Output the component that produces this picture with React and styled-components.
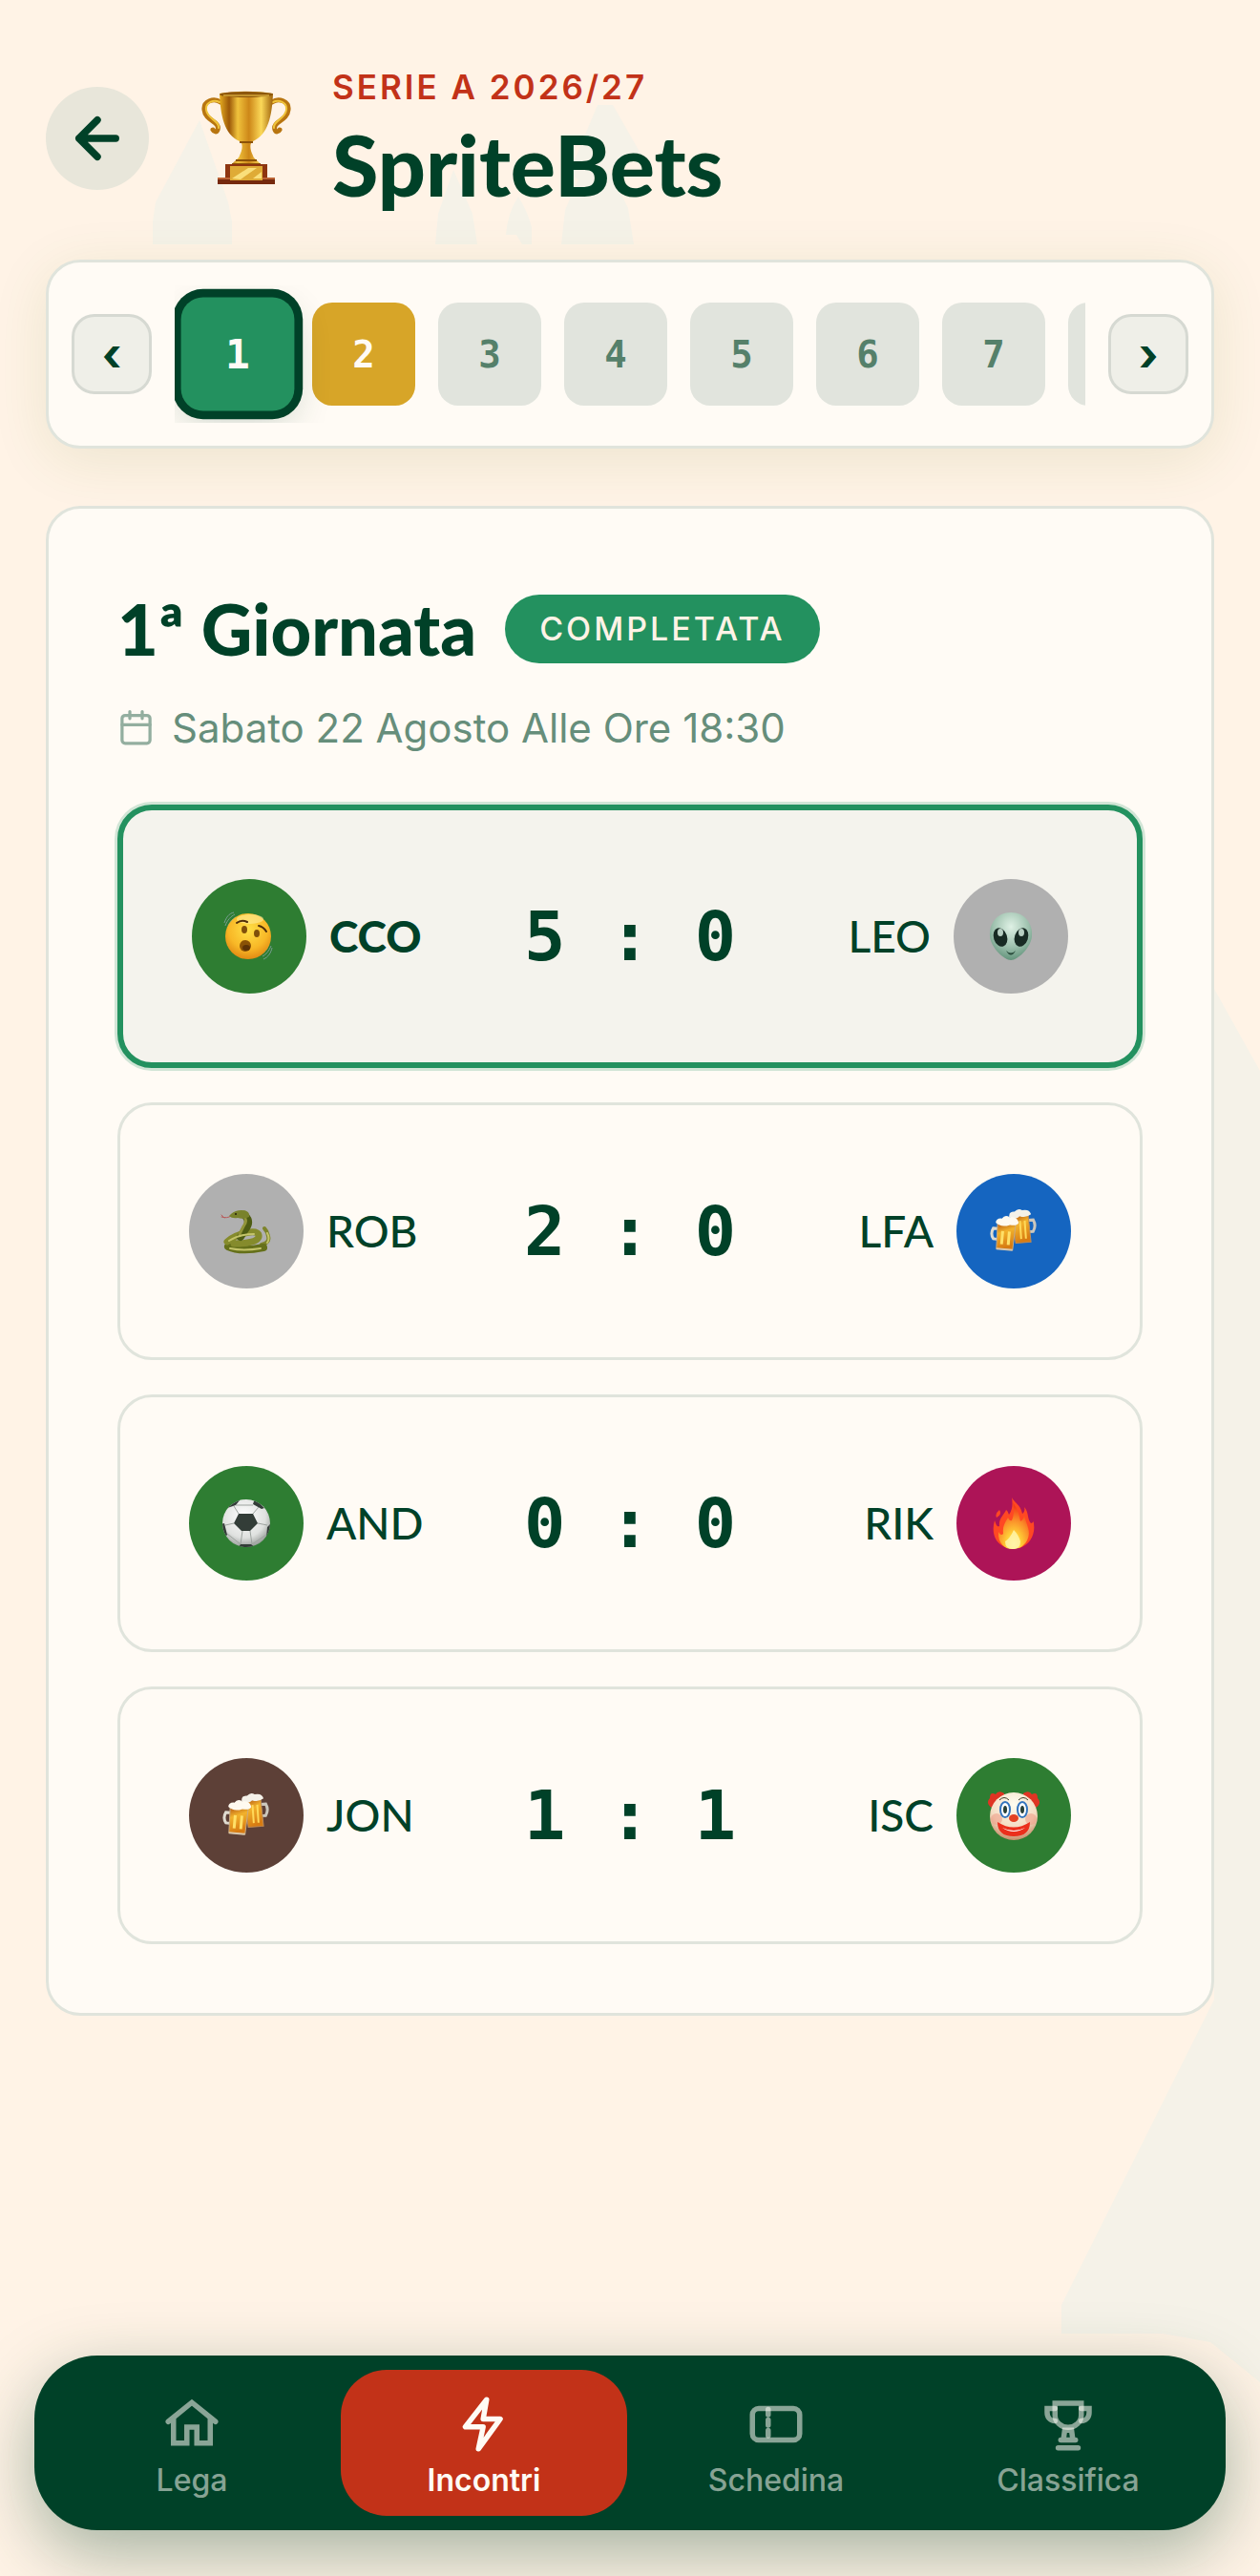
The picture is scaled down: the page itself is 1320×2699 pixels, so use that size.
import { useState } from "react";
import styled, { createGlobalStyle, css } from "styled-components";

const GlobalStyle = createGlobalStyle`
  * {
    box-sizing: border-box;
  }

  body {
    margin: 0;
    background: #fff3e6;
    color: #004128;
    font-family: Inter, "Open Sans", sans-serif;
  }

  button {
    font: inherit;
    padding: 0;
    border: 0;
    cursor: pointer;
  }

  h1, h2, p, ol, ul {
    margin: 0;
    padding: 0;
  }
`;

const Page = styled.div`
  position: relative;
  isolation: isolate;
  min-height: 100vh;
  display: flex;
  flex-direction: column;
  overflow: hidden;
`;

const HeaderTrees = styled.svg`
  position: absolute;
  z-index: -1;
  top: 108px;
  left: 156px;
  width: 560px;
  height: 150px;
`;

const SideTree = styled.svg`
  position: absolute;
  z-index: -1;
  top: 1036px;
  right: 0;
  width: 208px;
  height: 1460px;
`;

const Main = styled.main`
  padding: 64px 48px 60px;
`;

const Header = styled.header`
  display: flex;
  align-items: center;
  margin-bottom: 46px;
`;

const BackButton = styled.button`
  width: 108px;
  height: 108px;
  border-radius: 50%;
  display: flex;
  align-items: center;
  justify-content: center;
  background: #e8e6da;
  color: #004128;
`;

const LeagueBadge = styled.div`
  width: 132px;
  margin: 0 24px 0 36px;
  display: flex;
  justify-content: center;
`;

const Season = styled.p`
  font-size: 35px;
  line-height: 54px;
  font-weight: 600;
  letter-spacing: 3px;
  text-transform: uppercase;
  color: #c23218;
`;

const LeagueName = styled.h1`
  font-family: Lato, sans-serif;
  font-size: 88px;
  line-height: 108px;
  font-weight: 900;
`;

const Panel = styled.section`
  background: #fffbf5;
  border: 3px solid #e0e4dc;
  border-radius: 36px;
`;

const RoundPicker = styled(Panel).attrs({ as: "nav" })`
  display: flex;
  align-items: center;
  gap: 24px;
  padding: 24px;
  margin-bottom: 60px;
  box-shadow: 0 12px 60px rgba(80, 120, 20, 0.11);
`;

const StepButton = styled.button`
  flex: none;
  width: 84px;
  height: 84px;
  border: 3px solid #d6d9d2;
  border-radius: 24px;
  background: #efefe8;
  color: #004128;
  font-size: 48px;
  line-height: 72px;
  font-weight: 700;
`;

const Rounds = styled.ol`
  flex: 1;
  min-width: 0;
  display: flex;
  gap: 24px;
  padding: 18px 12px;
  overflow: hidden;
  list-style: none;
`;

const RoundChip = styled.button`
  display: block;
  width: 108px;
  height: 108px;
  border-radius: 21px;
  font-family: "DejaVu Sans Mono", monospace;
  font-size: 39px;
  font-weight: 700;
  background: #e1e4dd;
  color: #55806a;

  ${({ $status }) =>
    $status === "next" &&
    css`
      background: #d7a528;
      color: #fffbf5;
    `}

  ${({ $active }) =>
    $active &&
    css`
      transform: scale(1.1);
      background: #23915f;
      color: #fffbf5;
      box-shadow: 0 0 0 8px #004128, 0 12px 36px rgba(0, 65, 40, 0.2);
    `}
`;

const RoundCard = styled(Panel)`
  padding: 72px;
`;

const TitleRow = styled.div`
  display: flex;
  align-items: center;
  gap: 30px;
  margin-bottom: 18px;
`;

const RoundTitle = styled.h2`
  font-family: Lato, sans-serif;
  font-size: 74px;
  line-height: 108px;
  font-weight: 900;
`;

const Status = styled.span`
  height: 72px;
  padding: 0 36px;
  border-radius: 36px;
  background: #23915f;
  color: #fff3e6;
  font-size: 34px;
  line-height: 72px;
  font-weight: 500;
  letter-spacing: 3px;
  text-transform: uppercase;
`;

const DateRow = styled.p`
  display: flex;
  align-items: center;
  gap: 18px;
  margin-bottom: 49px;
  font-size: 42px;
  line-height: 63px;
  color: #668e7b;

  svg {
    opacity: 0.7;
  }
`;

const Matches = styled.ul`
  display: flex;
  flex-direction: column;
  gap: 36px;
  list-style: none;
`;

const Match = styled.li`
  display: grid;
  grid-template-columns: 1fr auto 1fr;
  align-items: center;
  padding: 72px;
  border: 3px solid #e0e4dc;
  border-radius: 36px;

  ${({ $mine }) =>
    $mine &&
    css`
      border: 6px solid #23915f;
      background: #f4f3ed;
      box-shadow: 0 0 0 3px #d1e5d6;
    `}
`;

const Team = styled.div`
  display: flex;
  align-items: center;
  gap: 24px;
  flex-direction: ${({ $away }) => ($away ? "row-reverse" : "row")};
  font-family: Lato, sans-serif;
  font-size: 46px;
  line-height: 60px;
  font-weight: ${({ $bold }) => ($bold ? 900 : 500)};
`;

const Avatar = styled.span`
  width: 120px;
  height: 120px;
  border-radius: 50%;
  display: flex;
  align-items: center;
  justify-content: center;
  background: ${({ $color }) => $color};
`;

const Score = styled.div`
  display: flex;
  gap: 46px;
  font-family: "DejaVu Sans Mono", monospace;
  font-size: 72px;
  line-height: 84px;
  font-weight: 700;
`;

const TabBar = styled.nav`
  display: grid;
  grid-template-columns: repeat(4, 1fr);
  gap: 6px;
  margin: auto 36px 48px;
  padding: 15px;
  border-radius: 66px;
  background: #004128;
  box-shadow: 0 24px 72px rgba(0, 65, 40, 0.36);
`;

const Tab = styled.a`
  display: flex;
  flex-direction: column;
  align-items: center;
  gap: 3px;
  padding: 24px 0 15px;
  border-radius: 48px;
  font-size: 32px;
  line-height: 45px;
  font-weight: ${({ $active }) => ($active ? 600 : 500)};
  color: ${({ $active }) => ($active ? "#fffbf5" : "rgba(255, 251, 245, 0.54)")};
  background: ${({ $active }) => ($active ? "#c23218" : "transparent")};
  text-decoration: none;
`;

const LineIcon = ({ size = 66, width = 2, children }) => (
  <svg
    width={size}
    height={size}
    viewBox="0 0 24 24"
    fill="none"
    stroke="currentColor"
    strokeWidth={width}
    strokeLinecap="round"
    aria-hidden="true"
  >
    {children}
  </svg>
);

const HomeIcon = () => (
  <LineIcon>
    <path d="M3 11l9-7.3 9 7.3M5 9.6V19.2h5.1v-6.1h3.8v6.1H19V9.6" />
  </LineIcon>
);

const BoltIcon = () => (
  <LineIcon>
    <path strokeLinejoin="round" d="M13 2.6L4.9 13h6.8l-1.8 8.4L18.2 10h-6.5z" />
  </LineIcon>
);

const TicketIcon = () => (
  <LineIcon>
    <rect x="3" y="6" width="18" height="12" rx="2.4" />
    <path strokeDasharray="2 2" d="M9 6.4v12" />
  </LineIcon>
);

const CupIcon = () => (
  <LineIcon>
    <path strokeLinecap="butt" d="M7 4h10v4.5a5 4.7 0 0 1-10 0z" />
    <path d="M7 6H4v1.5C4 9.3 5.2 10.7 7 10.7M17 6h3v1.5c0 1.8-1.2 3.2-3 3.2" />
    <path d="M10.7 14.3h2.6l.5 3.7h-3.6zM9.2 18h5.6M8.2 21h7.6" />
  </LineIcon>
);

const ArrowIcon = () => (
  <LineIcon width={2.7}>
    <path strokeLinejoin="round" d="M19 12H5M12 5l-7 7 7 7" />
  </LineIcon>
);

const CalendarIcon = () => (
  <LineIcon size={39}>
    <rect x="3" y="4" width="18" height="18" rx="2" />
    <path d="M3 10h18M8 1.6V6M16 1.6V6" />
  </LineIcon>
);

const Trophy = () => (
  <svg width="96" height="100" viewBox="0 0 96 100" aria-hidden="true">
    <defs>
      <linearGradient id="gold">
        <stop offset="0" stopColor="#e5ad22" />
        <stop offset=".18" stopColor="#9c5808" />
        <stop offset=".34" stopColor="#f0c23c" />
        <stop offset=".55" stopColor="#cd8718" />
        <stop offset=".78" stopColor="#fbd858" />
        <stop offset="1" stopColor="#9f620b" />
      </linearGradient>
    </defs>
    <g fill="none" strokeLinecap="round">
      <path d="M21 12C14 7 3 11 4 20c1 12 17 12 14 21-1 3-4 2-5 0M75 12c7-5 18-1 17 8-1 12-17 12-14 21 1 3 4 2 5 0" stroke="#b87510" strokeWidth="5" />
      <path d="M20 12C14 9 5 12 6 20c1 10 14 11 13 19M76 12c6-3 15 0 14 8-1 10-14 11-13 19" stroke="#efc33a" strokeWidth="2" />
    </g>
    <path d="M20 3c17-3 39-3 56 0-1 23-5 43-21 50-4 2-3 9 0 15 1 4 6 5 9 11H32c3-6 8-7 9-11 3-6 4-13 0-15C25 46 21 26 20 3z" fill="url(#gold)" />
    <ellipse cx="48" cy="4" rx="28" ry="3" fill="#8d570b" />
    <path d="M24 5h48" stroke="#f7cf52" strokeWidth="1" />
    <path d="M41 54h14M37 73h22M33 77h30" stroke="#8c5208" strokeWidth="2" />
    <path d="M26 77h44v16H26z" fill="#8e3510" />
    <path d="M18 92h60v6H18z" fill="#76290e" />
    <path d="M18 92h60" stroke="#bb6234" strokeWidth="2" />
    <path d="M31 79h34v15H31z" fill="#dfab36" />
    <path d="M33 92l17-11h9L42 93zM55 92l9-7v7z" fill="#f9df7b" />
  </svg>
);

const Face = () => (
  <svg width="58" height="56" viewBox="0 0 58 56" aria-hidden="true">
    <defs>
      <radialGradient id="face" cx=".5" cy=".35" r=".65">
        <stop offset="0" stopColor="#ffe047" />
        <stop offset=".65" stopColor="#f8b827" />
        <stop offset="1" stopColor="#e18a13" />
      </radialGradient>
    </defs>
    <g fill="none" stroke="#789c91" strokeWidth="1">
      <path d="M3 14C5 8 8 4 13 3M4 17c2-6 6-10 10-12M7 17c2-4 4-7 8-9M44 52c5-2 8-7 9-12M43 49c4-2 7-6 9-11M41 47c4-2 7-5 8-9" />
    </g>
    <ellipse cx="28" cy="28" rx="24" ry="24" fill="url(#face)" />
    <ellipse cx="30" cy="10" rx="14" ry="5" fill="#ffed9a" opacity=".6" />
    <path d="M16 14q5-4 11-1M39 17q5 1 8 6" fill="none" stroke="#51300a" strokeWidth="2" strokeLinecap="round" />
    <ellipse cx="24" cy="21" rx="3" ry="4" fill="#80500a" />
    <ellipse cx="37" cy="25" rx="3" ry="4" fill="#80500a" />
    <ellipse cx="25" cy="38" rx="6" ry="6" fill="#8a5206" />
    <ellipse cx="26" cy="40" rx="4" ry="3" fill="#5c3206" />
  </svg>
);

const Alien = () => (
  <svg width="52" height="54" viewBox="0 0 52 54" aria-hidden="true">
    <defs>
      <radialGradient id="alien" cx=".5" cy=".3" r=".7">
        <stop offset="0" stopColor="#dff1e5" />
        <stop offset=".6" stopColor="#9ec1ae" />
        <stop offset="1" stopColor="#62937b" />
      </radialGradient>
    </defs>
    <path d="M26 2C11 2 3 14 4 27c1 12 15 25 22 25s21-13 22-25C49 14 41 2 26 2z" fill="url(#alien)" />
    <ellipse cx="15" cy="28" rx="7" ry="10" fill="#182b24" transform="rotate(-18 15 28)" />
    <ellipse cx="37" cy="28" rx="7" ry="10" fill="#182b24" transform="rotate(18 37 28)" />
    <ellipse cx="15" cy="23" rx="3" ry="4" fill="#b7cfc2" />
    <ellipse cx="37" cy="23" rx="3" ry="4" fill="#b7cfc2" />
    <path d="M21 42q5 5 10 0q-5 9-10 0z" fill="#284b3a" />
  </svg>
);

const Snake = () => (
  <svg width="56" height="52" viewBox="0 0 56 52" aria-hidden="true">
    <g fill="none" strokeLinecap="round">
      <path d="M12 10Q8 13 2 11M5 12l-3-3" stroke="#b85a5a" strokeWidth="1" />
      <path d="M44 40q9-2 7-9-1-5-4-8" stroke="#7d842a" strokeWidth="4" />
      <path d="M9 42q13 6 37 1" stroke="#65701a" strokeWidth="8" />
      <path d="M8 37q9-8 24-10 10-1 9 5-2 7-26 7" stroke="#858b2c" strokeWidth="7" />
      <path d="M27 10q6 6 0 14l-5 8" stroke="#4e5c13" strokeWidth="8" />
      <path d="M25 9q5 6 0 12l-4 8" stroke="#92953a" strokeWidth="3" />
      <path d="M10 36q11-7 26-7M11 44q14 3 32 0M50 38q3-4 0-10" stroke="#c4c46a" strokeWidth="2" />
    </g>
    <path d="M10 10q5-6 13-6 9 0 8 7-6 3-12 1-6 1-9-2z" fill="#79822b" />
    <circle cx="17" cy="8" r="1" fill="#241d0a" />
  </svg>
);

const Ball = () => (
  <svg width="54" height="52" viewBox="0 0 54 52" aria-hidden="true">
    <defs>
      <radialGradient id="ball" cx=".45" cy=".35" r=".65">
        <stop offset="0" stopColor="#fff" />
        <stop offset=".7" stopColor="#dfe1df" />
        <stop offset="1" stopColor="#9b9f9c" />
      </radialGradient>
      <clipPath id="ballEdge">
        <circle cx="27" cy="26" r="25" />
      </clipPath>
    </defs>
    <circle cx="27" cy="26" r="25" fill="url(#ball)" />
    <g clipPath="url(#ballEdge)">
      <path d="M19 16h15l5 10-8 8h-9l-8-8zM7 2h13l-4 5-9 3zM36 0l10 10-3 1-9-5zM0 27l4-1 3 12-4 5zM54 25l-5 5-1 11 6 2zM18 52l3-4h11l5 4z" fill="#333d38" />
      <path d="M19 16l-5-8M34 16l6-7M14 26l-9 2M39 26l10 2M23 34l-2 14M31 34l2 14M7 37l14 11M48 38L33 48M16 7h18" fill="none" stroke="#9da39f" strokeWidth="1" />
    </g>
  </svg>
);

const Beers = () => (
  <svg width="50" height="48" viewBox="0 0 50 48" aria-hidden="true">
    <defs>
      <linearGradient id="beer" x2=".3" y2="1">
        <stop offset="0" stopColor="#b45712" />
        <stop offset=".4" stopColor="#f2b22c" />
        <stop offset="1" stopColor="#d77b12" />
      </linearGradient>
    </defs>
    <g transform="rotate(-4 34 20)">
      <path d="M40 13h6q3 6-1 12h-5" fill="none" stroke="#cbc7bd" strokeWidth="3" />
      <path d="M24 8h17l1 28H26z" fill="url(#beer)" stroke="#bd8c5a" strokeWidth="1" />
      <path d="M32 13v19M37 13v19" stroke="#ffd859" strokeWidth="2" />
      <path d="M21 8q0-6 6-5 4-4 8-1 8-1 9 5-6 4-12 1-5 5-11 0z" fill="#f4f1e9" />
    </g>
    <g transform="rotate(5 16 29)">
      <path d="M8 22H3q-3 6 1 11h6" fill="none" stroke="#dfdbd0" strokeWidth="3" />
      <path d="M7 16h19l-1 27H8z" fill="url(#beer)" stroke="#c9aa81" strokeWidth="1" />
      <path d="M13 24v14M20 24v14" stroke="#ffe068" strokeWidth="3" />
      <path d="M5 16q0-5 6-5 3-5 8-2 8-2 10 5-2 4-9 3-9 4-15-1z" fill="#fffaf0" />
      <path d="M8 43h17" stroke="#d9c7ac" strokeWidth="2" />
    </g>
  </svg>
);

const Fire = () => (
  <svg width="46" height="56" viewBox="0 0 46 56" aria-hidden="true">
    <defs>
      <radialGradient id="fire" cx=".5" cy=".9" r=".8">
        <stop offset="0" stopColor="#fff6a5" />
        <stop offset=".3" stopColor="#ffd037" />
        <stop offset=".65" stopColor="#fa8e29" />
        <stop offset="1" stopColor="#f33d17" />
      </radialGradient>
    </defs>
    <path d="M21 1c2 5 9 7 11 17 2-1 3-4 2-7 5 5 3 13 7 17 2 0 3-2 2-4 4 12-1 26-14 30H16C4 50-1 39 3 25c2 6 3 7 5 6-1-8 5-12 7-17 2 1 2 3 3 5 4-6 4-11 3-18zM8 14q-5 4-3 8 6-3 3-8z" fill="#ff4823" />
    <path d="M22 6c5 7 7 13 8 20q4-2 4-7c2 11 8 17 3 27-4 7-9 9-16 9S6 49 7 37c2 3 3 4 5 2-1-9 3-13 5-17 1 2 2 4 4 3 3-7 2-13 1-19z" fill="url(#fire)" />
    <path d="M23 35q5 5 7 12 0 8-8 8t-8-8q5-3 9-12z" fill="#fff4a9" opacity=".85" />
  </svg>
);

const Clown = () => (
  <svg width="56" height="54" viewBox="0 0 56 54" aria-hidden="true">
    <defs>
      <radialGradient id="clown" cx=".5" cy=".25" r=".75">
        <stop offset="0" stopColor="#fffdf0" />
        <stop offset=".65" stopColor="#f4dcc2" />
        <stop offset="1" stopColor="#c88e6b" />
      </radialGradient>
    </defs>
    <path d="M18 4Q12 0 9 5 3 2 3 9q-5 5 2 10 6-6 13-9zM38 4q6-4 9 1 6-3 6 4 5 5-2 10-6-6-13-9z" fill="#df3423" />
    <ellipse cx="28" cy="28" rx="25" ry="25" fill="url(#clown)" />
    <ellipse cx="10" cy="31" rx="6" ry="6" fill="#efa08a" opacity=".6" />
    <ellipse cx="46" cy="31" rx="6" ry="6" fill="#efa08a" opacity=".6" />
    <path d="M13 11q5-5 10 0M33 11q5-5 10 0" fill="none" stroke="#3f3c2b" strokeWidth="1" />
    <ellipse cx="19" cy="21" rx="5" ry="8" fill="#fff" stroke="#3474bd" strokeWidth="2" />
    <ellipse cx="37" cy="21" rx="5" ry="8" fill="#fff" stroke="#3474bd" strokeWidth="2" />
    <ellipse cx="19" cy="21" rx="2" ry="4" fill="#293f37" />
    <ellipse cx="37" cy="21" rx="2" ry="4" fill="#293f37" />
    <path d="M11 34q17 11 34 0q0 15-17 15T11 34z" fill="#eb2f1c" />
    <path d="M16 40q12 6 24 0q-12 8-24 0z" fill="#fff" />
    <ellipse cx="28" cy="30" rx="5" ry="4" fill="#e44122" />
  </svg>
);

const rounds = [1, 2, 3, 4, 5, 6, 7, 8];
const lastNumbered = 7;

const matches = [
  {
    mine: true,
    home: { name: "CCO", color: "#2e7d32", icon: Face, goals: 5 },
    away: { name: "LEO", color: "#b0b0b0", icon: Alien, goals: 0 },
  },
  {
    home: { name: "ROB", color: "#b0b0b0", icon: Snake, goals: 2 },
    away: { name: "LFA", color: "#1565c0", icon: Beers, goals: 0 },
  },
  {
    home: { name: "AND", color: "#2e7d32", icon: Ball, goals: 0 },
    away: { name: "RIK", color: "#ad1457", icon: Fire, goals: 0 },
  },
  {
    home: { name: "JON", color: "#5d4037", icon: Beers, goals: 1 },
    away: { name: "ISC", color: "#2e7d32", icon: Clown, goals: 1 },
  },
];

const tabs = [
  { label: "Lega", icon: HomeIcon },
  { label: "Incontri", icon: BoltIcon },
  { label: "Schedina", icon: TicketIcon },
  { label: "Classifica", icon: CupIcon },
];

const TeamSide = ({ team, away, bold }) => (
  <Team $away={away} $bold={bold}>
    <Avatar $color={team.color}>
      <team.icon />
    </Avatar>
    <span>{team.name}</span>
  </Team>
);

const App = () => {
  const [round, setRound] = useState(1);

  return (
    <Page>
      <GlobalStyle />
      <HeaderTrees viewBox="0 0 560 150" fill="#f5f2e8" aria-hidden="true">
        <path d="M53 18l30 86 4 20v24H4v-24l3-20z" />
        <path d="M319 70l20 46 5 32h-44l3-32zM387 98q10 16 14 32v18h-10l-6-10h-11q2-24 13-40z" />
        <path d="M470 2h16l32 56h-16l-20 12 20 40 6 38h-76l4-36 14-32-10-6z" />
      </HeaderTrees>
      <SideTree viewBox="0 0 208 1460" fill="#f5f2e8" aria-hidden="true">
        <path d="M160 0l48 86v1374l-52-42-50-9H0v-30l160-320z" />
      </SideTree>

      <Main>
        <Header>
          <BackButton type="button" aria-label="Indietro">
            <ArrowIcon />
          </BackButton>
          <LeagueBadge>
            <Trophy />
          </LeagueBadge>
          <div>
            <Season>Serie A 2026/27</Season>
            <LeagueName>SpriteBets</LeagueName>
          </div>
        </Header>

        <RoundPicker aria-label="Giornate">
          <StepButton type="button" aria-label="Precedente" onClick={() => setRound(Math.max(1, round - 1))}>
            ‹
          </StepButton>
          <Rounds>
            {rounds.map((n) => (
              <li key={n}>
                <RoundChip
                  type="button"
                  aria-label={`Giornata ${n}`}
                  $active={n === round}
                  $status={n === 2 ? "next" : "future"}
                  onClick={() => setRound(n)}
                >
                  {n <= lastNumbered && n}
                </RoundChip>
              </li>
            ))}
          </Rounds>
          <StepButton type="button" aria-label="Successiva" onClick={() => setRound(Math.min(8, round + 1))}>
            ›
          </StepButton>
        </RoundPicker>

        <RoundCard>
          <TitleRow>
            <RoundTitle>{round}ª Giornata</RoundTitle>
            <Status>Completata</Status>
          </TitleRow>
          <DateRow>
            <CalendarIcon />
            <span>Sabato 22 Agosto Alle Ore 18:30</span>
          </DateRow>
          <Matches>
            {matches.map(({ home, away, mine }) => (
              <Match key={home.name} $mine={mine}>
                <TeamSide team={home} bold={mine} />
                <Score>
                  <span>{home.goals}</span>
                  <span>:</span>
                  <span>{away.goals}</span>
                </Score>
                <TeamSide team={away} away />
              </Match>
            ))}
          </Matches>
        </RoundCard>
      </Main>

      <TabBar>
        {tabs.map(({ label, icon: Icon }) => (
          <Tab key={label} href="#" $active={label === "Incontri"}>
            <Icon />
            {label}
          </Tab>
        ))}
      </TabBar>
    </Page>
  );
};

export default App;
